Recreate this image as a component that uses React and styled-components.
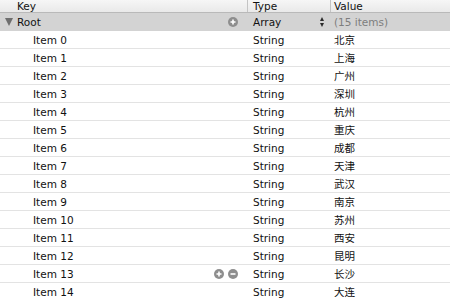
import React from 'react'
import styled, { createGlobalStyle } from 'styled-components'

const GlobalStyle = createGlobalStyle`
  html, body { margin: 0; padding: 0; background: #fff; }
  body { font-family: "DejaVu Sans", "Noto Sans CJK SC", sans-serif; font-size: 10.5px; color: #111; }
`

const Table = styled.div`
  width: 450px;
  height: 300px;
  overflow: hidden;
  background: #fff;
`

const Header = styled.div`
  display: grid;
  grid-template-columns: 247px 83px 1fr;
  height: 12px;
  border-bottom: 1px solid #b9b9b9;
  background: linear-gradient(#f6f6f6, #e9e9e9);
`

const HeadCell = styled.div`
  display: flex;
  align-items: center;
  padding-left: ${p => p.pad}px;
  border-left: ${p => (p.first ? 'none' : '1px solid #c4c4c4')};
  line-height: 12px;
  overflow: hidden;
`

const Row = styled.div`
  display: grid;
  grid-template-columns: 247px 83px 1fr;
  height: 17px;
  border-bottom: 1px solid ${p => (p.selected ? '#d3d3d3' : '#e3e3e3')};
  background: ${p => (p.selected ? '#d3d3d3' : '#fff')};
`

const KeyCell = styled.div`
  display: flex;
  align-items: center;
  padding-left: ${p => p.indent}px;
  position: relative;
`

const TypeCell = styled.div`
  display: flex;
  align-items: center;
  padding-left: 6px;
  position: relative;
`

const ValueCell = styled.div`
  display: flex;
  align-items: center;
  padding-left: 4px;
  color: ${p => (p.muted ? '#7d7d7d' : '#111')};
`

const Disclosure = styled.span`
  width: 0;
  height: 0;
  border-left: 4px solid transparent;
  border-right: 4px solid transparent;
  border-top: 8px solid #6e6e6e;
  margin-left: 5px;
  margin-right: 4px;
`

const Actions = styled.div`
  position: absolute;
  right: 9px;
  top: 4px;
  display: flex;
  gap: 4px;
`

const RoundBtn = styled.span`
  width: 10px;
  height: 10px;
  border-radius: 50%;
  background: #8e8e8e;
  display: flex;
  align-items: center;
  justify-content: center;
`

const Stepper = styled.div`
  position: absolute;
  right: 6px;
  top: 4px;
  display: flex;
  flex-direction: column;
  gap: 2px;
`

const Tri = styled.span`
  width: 0;
  height: 0;
  border-left: 2.5px solid transparent;
  border-right: 2.5px solid transparent;
  ${p => (p.up ? 'border-bottom: 4px solid #2a2a2a;' : 'border-top: 4px solid #2a2a2a;')}
`

const Plus = () => (
  <svg width="8" height="8" viewBox="0 0 8 8">
    <path d="M4 1.5v5M1.5 4h5" stroke="#fff" strokeWidth="1.6" />
  </svg>
)

const Minus = () => (
  <svg width="8" height="8" viewBox="0 0 8 8">
    <path d="M1.5 4h5" stroke="#fff" strokeWidth="1.6" />
  </svg>
)

const cities = ['北京', '上海', '广州', '深圳', '杭州', '重庆', '成都', '天津', '武汉', '南京', '苏州', '西安', '昆明', '长沙', '大连']

export default function App() {
  return (
    <>
      <GlobalStyle />
      <Table>
        <Header>
          <HeadCell first pad={17}>Key</HeadCell>
          <HeadCell pad={5}>Type</HeadCell>
          <HeadCell pad={3}>Value</HeadCell>
        </Header>
        <Row selected>
          <KeyCell indent={0}>
            <Disclosure />
            Root
            <Actions>
              <RoundBtn><Plus /></RoundBtn>
            </Actions>
          </KeyCell>
          <TypeCell>
            Array
            <Stepper>
              <Tri up />
              <Tri />
            </Stepper>
          </TypeCell>
          <ValueCell muted>(15 items)</ValueCell>
        </Row>
        {cities.map((city, i) => (
          <Row key={i}>
            <KeyCell indent={33}>
              Item {i}
              {i === 13 && (
                <Actions>
                  <RoundBtn><Plus /></RoundBtn>
                  <RoundBtn><Minus /></RoundBtn>
                </Actions>
              )}
            </KeyCell>
            <TypeCell>String</TypeCell>
            <ValueCell>{city}</ValueCell>
          </Row>
        ))}
      </Table>
    </>
  )
}
